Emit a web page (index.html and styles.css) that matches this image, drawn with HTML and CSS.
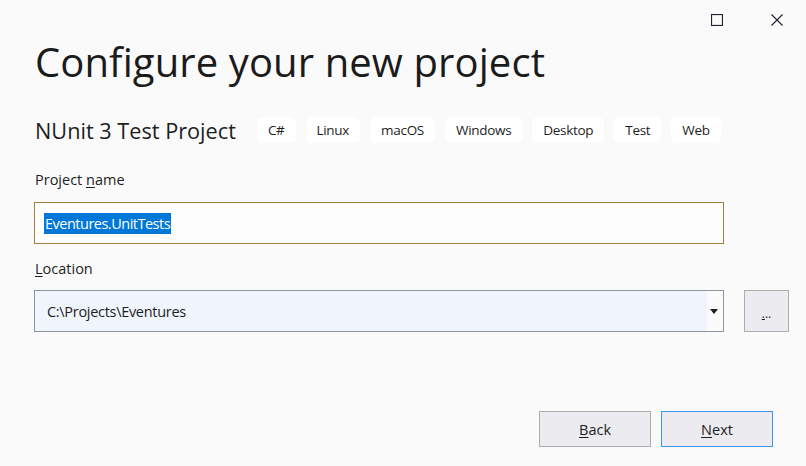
FILE: index.html
```html
<!DOCTYPE html>
<html lang="en">
<head>
<meta charset="utf-8">
<title>Configure your new project</title>
<link rel="stylesheet" href="styles.css">
</head>
<body>
<div class="window">
  <div class="titlebar">
    <div class="ctrl">
      <svg width="12" height="12" viewBox="0 0 12 12"><rect x="0.5" y="0.5" width="11" height="11" fill="none" stroke="#1f2333" stroke-width="1.2"/></svg>
    </div>
    <div class="ctrl">
      <svg width="12" height="12" viewBox="0 0 12 12"><path d="M0.5 0.5 L11.5 11.5 M11.5 0.5 L0.5 11.5" stroke="#1f2333" stroke-width="1.1" fill="none"/></svg>
    </div>
  </div>
  <div class="content">
    <h1 class="title">Configure your new project</h1>
    <div class="template-row">
      <span class="template-name">NUnit 3 Test Project</span>
      <div class="tags">
        <span class="tag">C#</span>
        <span class="tag">Linux</span>
        <span class="tag">macOS</span>
        <span class="tag">Windows</span>
        <span class="tag">Desktop</span>
        <span class="tag">Test</span>
        <span class="tag">Web</span>
      </div>
    </div>
    <div class="field-label label-name">Project <u>n</u>ame</div>
    <div class="textbox"><span class="selected">Eventures.UnitTests</span></div>
    <div class="field-label label-loc"><u>L</u>ocation</div>
    <div class="location-row">
      <div class="combo">
        <span class="combo-text">C:\Projects\Eventures</span>
        <span class="combo-arrow"><svg width="8" height="5" viewBox="0 0 8 5"><path d="M0 0 H8 L4 5 Z" fill="#1e1e1e"/></svg></span>
      </div>
      <div class="browse"><u>.</u>..</div>
    </div>
    <div class="footer">
      <div class="btn"><u>B</u>ack</div>
      <div class="btn btn-primary"><u>N</u>ext</div>
    </div>
  </div>
</div>
</body>
</html>
```
FILE: styles.css
```css
* { box-sizing: border-box; }
html, body {
  margin: 0;
  padding: 0;
  background: #fafafa;
}
body {
  width: 806px;
  height: 466px;
  overflow: hidden;
  font-family: "Open Sans", "Noto Sans", sans-serif;
  color: #1e1e1e;
}
.titlebar {
  display: flex;
  justify-content: flex-end;
  height: 38px;
  padding-right: 17px;
}
.ctrl {
  width: 60px;
  height: 38px;
  display: flex;
  align-items: flex-start;
  justify-content: flex-end;
  padding-top: 14px;
  padding-right: 6px;
}
.ctrl svg { display: block; }
.content {
  padding-left: 34px;
}
.title {
  margin: 0;
  font-size: 40px;
  font-weight: 400;
  line-height: 48px;
  color: #1b1b1b;
  letter-spacing: 0.1px;
  padding-left: 1px;
}
.template-row {
  display: flex;
  align-items: center;
  margin-top: 31px;
  height: 26px;
}
.template-name {
  font-size: 21.7px;
  padding-left: 1px;
  margin-right: 21px;
  letter-spacing: 0;
}
.tags {
  display: flex;
  gap: 10px;
}
.tag {
  background: #ffffff;
  border-radius: 6px;
  height: 26px;
  line-height: 26px;
  padding: 0 11px;
  font-size: 13.5px;
  letter-spacing: -0.3px;
}
.field-label {
  font-size: 14.5px;
  line-height: 20px;
  padding-left: 1px;
}
.label-name { margin-top: 27px; }
.label-loc { margin-top: 15px; }
.field-label u { text-underline-offset: 2px; }
.textbox {
  margin-top: 12px;
  width: 690px;
  height: 42px;
  border: 1px solid #a27f3d;
  background: #fdfdfd;
  display: flex;
  align-items: center;
  padding-left: 9px;
}
.selected {
  background: #0078d7;
  color: #ffffff;
  font-size: 14.5px;
  line-height: 21px;
  padding: 0 1px;
  letter-spacing: -0.5px;
}
.location-row {
  margin-top: 11px;
  display: flex;
  gap: 20px;
}
.combo {
  width: 690px;
  height: 42px;
  border: 1px solid #8b93a5;
  background: #f0f4fd;
  display: flex;
  align-items: stretch;
}
.combo-text {
  flex: 1;
  display: flex;
  align-items: center;
  padding-left: 12px;
  font-size: 14.5px;
  letter-spacing: -0.3px;
}
.combo-arrow {
  width: 16px;
  background: #fbfbfb;
  display: flex;
  align-items: center;
  justify-content: flex-start;
  padding-left: 3px;
}
.combo-arrow svg { display: block; }
.browse {
  width: 45px;
  height: 42px;
  border: 1px solid #adadad;
  background: #ebebf0;
  font-size: 12px;
  display: flex;
  align-items: center;
  justify-content: center;
  padding-top: 4px;
}
.footer {
  margin-top: 79px;
  display: flex;
  justify-content: flex-end;
  gap: 10px;
  padding-right: 33px;
}
.btn {
  width: 112px;
  height: 36px;
  border: 1px solid #adadad;
  background: #ebebf0;
  display: flex;
  align-items: center;
  justify-content: center;
  font-size: 14.5px;
}
.btn u { text-underline-offset: 2px; }
.btn-primary {
  border-color: #3c96ef;
}
```
